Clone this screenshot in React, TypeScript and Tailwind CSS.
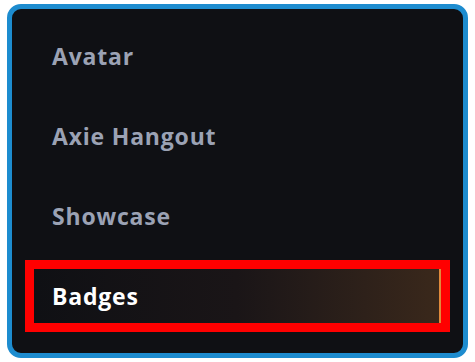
import React from 'react'

const items = ['Avatar', 'Axie Hangout', 'Showcase', 'Badges']

export default function App() {
  const active = 'Badges'
  return (
    <div className="w-[475px] h-[362px] bg-white pl-[7px] pt-[4px]" style={{ fontFamily: '"Open Sans", "Noto Sans", sans-serif' }}>
      <div className="w-[461px] h-[354px] rounded-[14px] border-[5px] border-[#1d8ccf] bg-[#0f1014] px-[22px] pt-[20px] flex flex-col gap-[26px]">
        {items.map(item =>
          item === active ? (
            <div key={item} className="-mx-[9px] -my-[9px] border-[9px] border-[#ff0000]">
              <div className="h-[54px] flex items-center pl-[18px] border-r-2 border-[#e08a3c] bg-gradient-to-r from-[#0f1014] via-[#1a1517] to-[#3a281b] text-white text-[23px] tracking-[0.035em] font-bold">
                {item}
              </div>
            </div>
          ) : (
            <div key={item} className="h-[54px] flex items-center pl-[18px] text-[#9ba2b4] text-[23px] tracking-[0.035em] font-bold">
              {item}
            </div>
          )
        )}
      </div>
    </div>
  )
}
